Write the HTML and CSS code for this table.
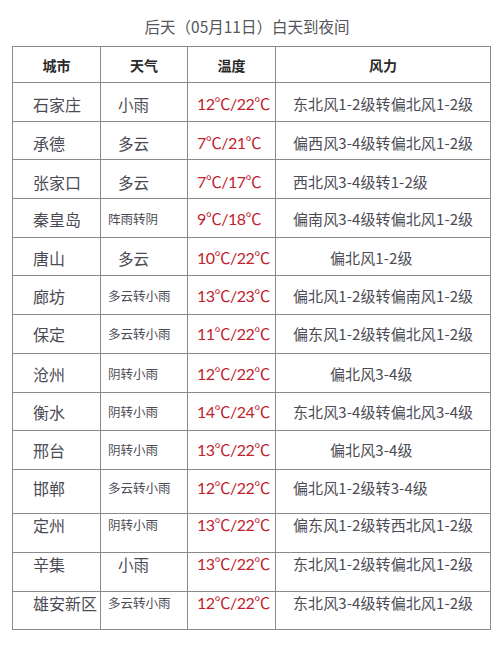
FILE: index.html
```html
<!DOCTYPE html>
<html lang="zh-CN">
<head>
<meta charset="utf-8">
<title>后天天气</title>
<link rel="stylesheet" href="styles.css">
</head>
<body>
<div class="page">
  <h1 class="title">后天（05月11日）白天到夜间</h1>
  <table class="wx">
    <colgroup>
      <col class="c-city"><col class="c-wx"><col class="c-temp"><col class="c-wind">
    </colgroup>
    <thead>
      <tr class="head"><th>城市</th><th>天气</th><th>温度</th><th>风力</th></tr>
    </thead>
    <tbody>
      <tr class="r1"><td class="city">石家庄</td><td class="wx2">小雨</td><td class="temp">12℃/22℃</td><td class="wind">东北风1-2级转偏北风1-2级</td></tr>
      <tr class="r1"><td class="city">承德</td><td class="wx2">多云</td><td class="temp">7℃/21℃</td><td class="wind">偏西风3-4级转偏北风1-2级</td></tr>
      <tr class="r1"><td class="city">张家口</td><td class="wx2">多云</td><td class="temp">7℃/17℃</td><td class="wind">西北风3-4级转1-2级</td></tr>
      <tr class="r2"><td class="city">秦皇岛</td><td class="wxs">阵雨转阴</td><td class="temp">9℃/18℃</td><td class="wind">偏南风3-4级转偏北风1-2级</td></tr>
      <tr class="r2"><td class="city">唐山</td><td class="wx2">多云</td><td class="temp">10℃/22℃</td><td class="wind short">偏北风1-2级</td></tr>
      <tr class="r2"><td class="city">廊坊</td><td class="wxs">多云转小雨</td><td class="temp">13℃/23℃</td><td class="wind">偏北风1-2级转偏南风1-2级</td></tr>
      <tr class="r3"><td class="city">保定</td><td class="wxs">多云转小雨</td><td class="temp">11℃/22℃</td><td class="wind">偏东风1-2级转偏北风1-2级</td></tr>
      <tr class="r2"><td class="city">沧州</td><td class="wxs">阴转小雨</td><td class="temp">12℃/22℃</td><td class="wind short">偏北风3-4级</td></tr>
      <tr class="r2"><td class="city">衡水</td><td class="wxs">阴转小雨</td><td class="temp">14℃/24℃</td><td class="wind">东北风3-4级转偏北风3-4级</td></tr>
      <tr class="r3"><td class="city">邢台</td><td class="wxs">阴转小雨</td><td class="temp">13℃/22℃</td><td class="wind short">偏北风3-4级</td></tr>
      <tr class="tall"><td class="city">邯郸</td><td class="wxs">多云转小雨</td><td class="temp">12℃/22℃</td><td class="wind">偏北风1-2级转3-4级</td></tr>
      <tr class="top"><td class="city">定州</td><td class="wxs">阴转小雨</td><td class="temp">13℃/22℃</td><td class="wind">偏东风1-2级转西北风1-2级</td></tr>
      <tr class="top"><td class="city">辛集</td><td class="wx2">小雨</td><td class="temp">13℃/22℃</td><td class="wind">东北风1-2级转偏北风1-2级</td></tr>
      <tr class="top"><td class="city">雄安新区</td><td class="wxs">多云转小雨</td><td class="temp">12℃/22℃</td><td class="wind">东北风3-4级转偏北风1-2级</td></tr>
    </tbody>
  </table>
</div>
</body>
</html>
```

FILE: styles.css
```css
html, body {
  margin: 0;
  padding: 0;
  background: #ffffff;
}

.page {
  width: 500px;
  height: 646px;
  font-family: "Noto Sans CJK SC", "Noto Sans", sans-serif;
  color: #4b4b55;
}

.title {
  margin: 0;
  height: 46px;
  box-sizing: border-box;
  padding-top: 15px;
  padding-right: 6px;
  font-size: 15.5px;
  line-height: 22px;
  font-weight: normal;
  text-align: center;
  color: #55555c;
}

.wx {
  margin-left: 12px;
  width: 478px;
  border-collapse: collapse;
  table-layout: fixed;
  border: 1.5px solid #8a8a8a;
}

.c-city { width: 88px; }
.c-wx { width: 87px; }
.c-temp { width: 88px; }
.c-wind { width: 215px; }

.wx th,
.wx td {
  border: 1.5px solid #8a8a8a;
  padding: 0;
  white-space: nowrap;
  overflow: hidden;
  line-height: 20px;
}

.head { height: 36px; }

.wx th {
  font-size: 14px;
  font-weight: bold;
  color: #2a2a2a;
  text-align: center;
  vertical-align: middle;
  padding-top: 1px;
}

.wx td {
  vertical-align: middle;
}

.r1, .r2, .r3, .top { height: 38.7px; }
.tall { height: 44.4px; }

.r1 td { padding-top: 5px; }
.r2 td { padding-top: 2px; }
.r3 td { padding-top: 0; }

.tall td {
  vertical-align: top;
  padding-top: 8px;
}

.top td {
  vertical-align: top;
  padding-top: 1px;
}

.city {
  padding-left: 20px !important;
  font-size: 16px;
}

.wx2 {
  padding-left: 17px !important;
  font-size: 15.5px;
}

.wxs {
  padding-left: 7px !important;
  font-size: 12.5px;
}

.temp {
  padding-left: 9px !important;
  font-family: Lato, "Noto Sans CJK SC", sans-serif;
  font-size: 16px;
  letter-spacing: -0.5px;
  color: #c0232e;
}

.wind {
  padding-left: 17px !important;
  font-size: 15px;
  letter-spacing: 0.1px;
}

.wind.short {
  padding-left: 54px !important;
}
```
